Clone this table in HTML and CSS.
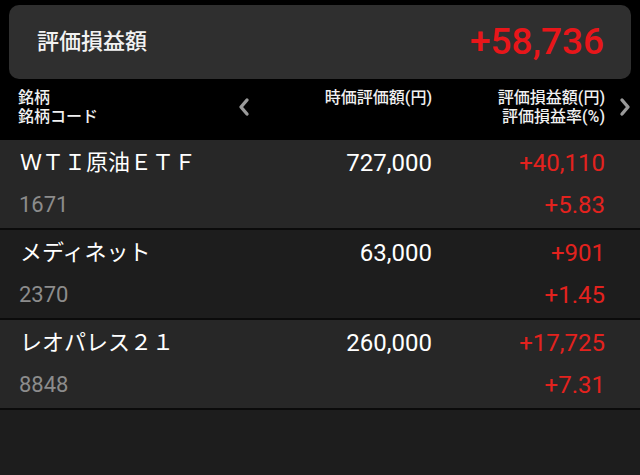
FILE: index.html
```html
<!DOCTYPE html>
<html lang="ja">
<head>
<meta charset="utf-8">
<link rel="stylesheet" href="styles.css">
</head>
<body>
<div class="screen">
  <div class="summary">
    <span class="summary-label">評価損益額</span>
    <span class="summary-value">+58,736</span>
  </div>
  <div class="header">
    <div class="h-name">
      <div>銘柄</div>
      <div>銘柄コード</div>
    </div>
    <div class="h-nav">
      <svg width="14" height="22" viewBox="0 0 14 22"><polyline points="10,4 4,11 10,18" fill="none" stroke="#9a9a9a" stroke-width="3.4" stroke-linecap="round" stroke-linejoin="round"/></svg>
    </div>
    <div class="h-value">
      <div>時価評価額(円)</div>
    </div>
    <div class="h-pl">
      <div>評価損益額(円)</div>
      <div>評価損益率(%)</div>
    </div>
    <div class="h-nav h-nav-right">
      <svg width="14" height="22" viewBox="0 0 14 22"><polyline points="4,4 10,11 4,18" fill="none" stroke="#9a9a9a" stroke-width="3.4" stroke-linecap="round" stroke-linejoin="round"/></svg>
    </div>
  </div>
  <div class="list">
    <div class="row row-odd">
      <div class="name">ＷＴＩ原油ＥＴＦ</div>
      <div class="value">727,000</div>
      <div class="pl">+40,110</div>
      <div class="code">1671</div>
      <div class="rate">+5.83</div>
    </div>
    <div class="row row-even">
      <div class="name">メディネット</div>
      <div class="value">63,000</div>
      <div class="pl">+901</div>
      <div class="code">2370</div>
      <div class="rate">+1.45</div>
    </div>
    <div class="row row-odd">
      <div class="name">レオパレス２１</div>
      <div class="value">260,000</div>
      <div class="pl">+17,725</div>
      <div class="code">8848</div>
      <div class="rate">+7.31</div>
    </div>
  </div>
</div>
</body>
</html>
```
FILE: styles.css
```css
html, body {
  margin: 0;
  padding: 0;
  background: #000;
}
body {
  font-family: Roboto, "Noto Sans CJK JP", sans-serif;
  color: #fff;
}
.screen {
  width: 640px;
  height: 475px;
  overflow: hidden;
  display: flex;
  flex-direction: column;
  background: #000;
}
.summary {
  margin: 5px 9px 0 9px;
  height: 74px;
  flex: none;
  border-radius: 10px;
  background: #2f2f2f;
  display: flex;
  align-items: center;
  justify-content: space-between;
  padding: 0 27px 0 28px;
  box-sizing: border-box;
}
.summary-label {
  font-size: 22px;
  font-weight: 500;
  color: #f2f2f2;
  line-height: 30px;
}
.summary-value {
  font-size: 37px;
  font-weight: 500;
  color: #e8161a;
  line-height: 40px;
}
.header {
  height: 61px;
  flex: none;
  display: grid;
  grid-template-columns: 219px 14px 181px 173px 35px;
  align-items: start;
  box-sizing: border-box;
  padding: 9px 0 0 18px;
  font-size: 16px;
  font-weight: 500;
  line-height: 19px;
  color: #f0f0f0;
}
.h-value, .h-pl {
  text-align: right;
}
.h-nav {
  height: 38px;
  display: flex;
  align-items: center;
  justify-content: center;
}
.h-nav-right {
  justify-content: flex-end;
  padding-right: 8px;
}
.list {
  flex: 1;
  background: #1d1d1d;
}
.row {
  height: 90px;
  border-bottom: 2px solid #0b0b0b;
  display: grid;
  grid-template-columns: 1fr 160px 173px;
  grid-template-rows: 30px 30px;
  row-gap: 12px;
  padding: 8px 35px 0 20px;
  box-sizing: border-box;
}
.row-odd {
  background: #272727;
}
.row-even {
  background: #1d1d1d;
}
.name {
  font-size: 22px;
  line-height: 30px;
  color: #fff;
  white-space: nowrap;
}
.value {
  font-size: 24px;
  line-height: 30px;
  text-align: right;
  color: #fff;
}
.pl, .rate {
  font-size: 24px;
  line-height: 30px;
  text-align: right;
  color: #e3221e;
}
.code {
  grid-column: 1 / 3;
  font-size: 22px;
  line-height: 30px;
  color: #8c8c8c;
  margin-left: -1px;
}
.rate {
  grid-column: 3;
}
```
